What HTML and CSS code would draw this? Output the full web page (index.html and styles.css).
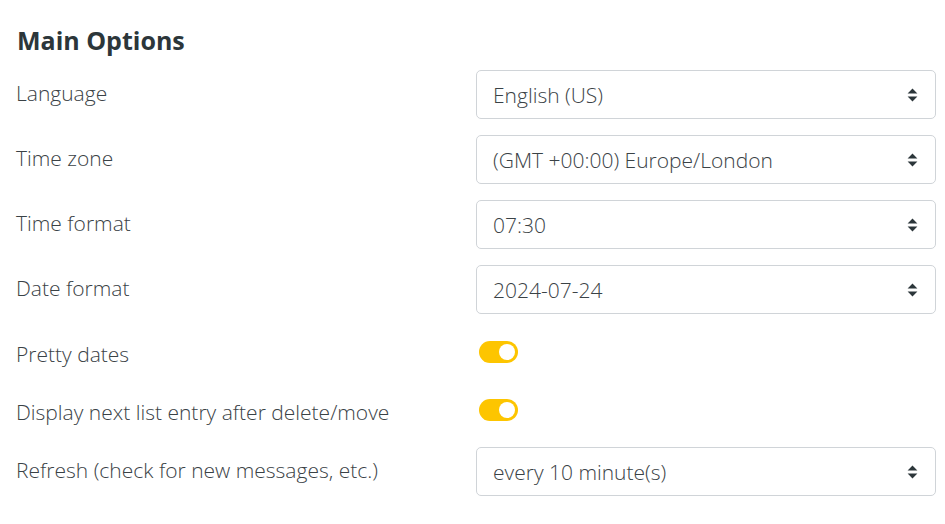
FILE: index.html
```html
<!DOCTYPE html>
<html lang="en">
<head>
<meta charset="utf-8">
<title>Main Options</title>
<link rel="stylesheet" href="styles.css">
</head>
<body>
<div class="panel">
  <h2 class="title">Main Options</h2>
  <div class="form">
    <div class="row">
      <div class="label">Language</div>
      <div class="field"><div class="select"><span>English (US)</span><svg class="sort" viewBox="0 0 11 14"><path d="M0.6 5.6 L5.5 0.6 L10.4 5.6 Z M0.6 8.4 L10.4 8.4 L5.5 13.4 Z"/></svg></div></div>
    </div>
    <div class="row">
      <div class="label">Time zone</div>
      <div class="field"><div class="select"><span>(GMT +00:00) Europe/London</span><svg class="sort" viewBox="0 0 11 14"><path d="M0.6 5.6 L5.5 0.6 L10.4 5.6 Z M0.6 8.4 L10.4 8.4 L5.5 13.4 Z"/></svg></div></div>
    </div>
    <div class="row">
      <div class="label">Time format</div>
      <div class="field"><div class="select"><span>07:30</span><svg class="sort" viewBox="0 0 11 14"><path d="M0.6 5.6 L5.5 0.6 L10.4 5.6 Z M0.6 8.4 L10.4 8.4 L5.5 13.4 Z"/></svg></div></div>
    </div>
    <div class="row">
      <div class="label">Date format</div>
      <div class="field"><div class="select"><span>2024-07-24</span><svg class="sort" viewBox="0 0 11 14"><path d="M0.6 5.6 L5.5 0.6 L10.4 5.6 Z M0.6 8.4 L10.4 8.4 L5.5 13.4 Z"/></svg></div></div>
    </div>
    <div class="row toggle-row">
      <div class="label">Pretty dates</div>
      <div class="field"><span class="switch"><span class="knob"></span></span></div>
    </div>
    <div class="row toggle-row">
      <div class="label">Display next list entry after delete/move</div>
      <div class="field"><span class="switch"><span class="knob"></span></span></div>
    </div>
    <div class="row">
      <div class="label">Refresh (check for new messages, etc.)</div>
      <div class="field"><div class="select"><span>every 10 minute(s)</span><svg class="sort" viewBox="0 0 11 14"><path d="M0.6 5.6 L5.5 0.6 L10.4 5.6 Z M0.6 8.4 L10.4 8.4 L5.5 13.4 Z"/></svg></div></div>
    </div>
  </div>
</div>
</body>
</html>
```
FILE: styles.css
```css
html, body {
  margin: 0;
  padding: 0;
  background: #ffffff;
}
body {
  font-family: "Open Sans", "Liberation Sans", sans-serif;
  color: #2c363a;
}
.panel {
  padding: 20px 9px 0 16px;
}
.title {
  margin: 0 0 0 1px;
  font-size: 25px;
  font-weight: 700;
  line-height: 40px;
  color: #2c363a;
}
.form {
  display: flex;
  flex-direction: column;
  padding-top: 2px;
}
.row {
  display: flex;
  align-items: center;
  padding: 8px 0;
}
.toggle-row {
  min-height: 42px;
}
.row:not(.toggle-row) + .toggle-row {
  padding-top: 9px;
}
.label {
  width: 460px;
  font-size: 21px;
  font-weight: 300;
  color: #3a4246;
  padding-bottom: 4px;
}
.toggle-row .label {
  padding-bottom: 0;
  padding-top: 3px;
}
.field {
  flex: 1;
  display: flex;
  align-items: center;
}
.select {
  flex: 1;
  height: 49px;
  box-sizing: border-box;
  border: 1px solid #d0d4d8;
  border-radius: 5px;
  display: flex;
  align-items: center;
  justify-content: space-between;
  padding: 0 17px 0 16px;
  font-size: 21px;
  font-weight: 300;
  color: #3a4246;
}
.sort {
  width: 11px;
  height: 14px;
  fill: #2c363a;
}
.switch {
  margin-left: 3px;
  width: 39px;
  height: 22px;
  border-radius: 11px;
  background: #fdc500;
  display: flex;
  align-items: center;
  justify-content: flex-end;
  padding-right: 3px;
  box-sizing: border-box;
}
.knob {
  width: 16px;
  height: 16px;
  border-radius: 50%;
  background: #ffffff;
}
```
